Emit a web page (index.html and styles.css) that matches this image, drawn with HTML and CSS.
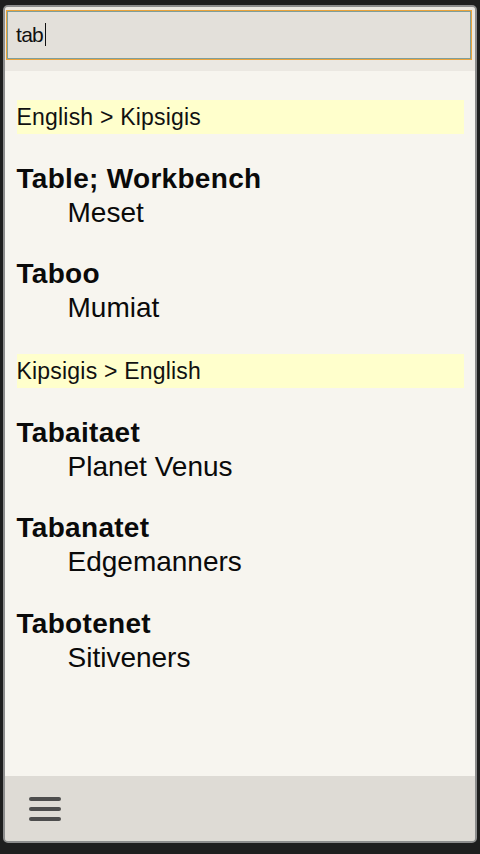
FILE: index.html
```html
<!DOCTYPE html>
<html>
<head>
<meta charset="utf-8">
<link rel="stylesheet" href="styles.css">
</head>
<body>
<div class="window">
  <div class="search-area">
    <div class="search-input"><span class="query">tab</span><span class="caret"></span></div>
  </div>
  <div class="results">
    <div class="band">English &gt; Kipsigis</div>
    <div class="entry"><div class="head">Table; Workbench</div><div class="trans">Meset</div></div>
    <div class="entry"><div class="head">Taboo</div><div class="trans">Mumiat</div></div>
    <div class="band">Kipsigis &gt; English</div>
    <div class="entry"><div class="head">Tabaitaet</div><div class="trans">Planet Venus</div></div>
    <div class="entry"><div class="head">Tabanatet</div><div class="trans">Edgemanners</div></div>
    <div class="entry"><div class="head">Tabotenet</div><div class="trans">Sitiveners</div></div>
  </div>
  <div class="toolbar">
    <div class="menu-icon"><span></span><span></span><span></span></div>
  </div>
</div>
</body>
</html>
```
FILE: styles.css
```css
html, body {
  margin: 0;
  padding: 0;
  background: #1e1e1e;
  width: 480px;
  height: 854px;
  overflow: hidden;
  font-family: "Liberation Sans", Arial, sans-serif;
}
.window {
  margin: 5px 3px 0 3px;
  height: 838px;
  box-sizing: border-box;
  border: 2px solid #8c8c8c;
  border-radius: 5px;
  box-shadow: inset 0 0 0 1px #b9b9b5;
  display: flex;
  flex-direction: column;
  overflow: hidden;
  background: #f7f5ef;
}
.search-area {
  background: #ebe8e2;
  padding: 3px 3px 11px 1px;
}
.search-input {
  height: 50px;
  box-sizing: border-box;
  border: 1px solid #eaa43c;
  box-shadow: inset 0 0 0 1px #7f9f9b;
  background: #e3e0da;
  display: flex;
  align-items: center;
  padding-left: 9px;
}
.query {
  font-size: 21px;
  letter-spacing: -0.7px;
  color: #111;
}
.caret {
  width: 1px;
  height: 23px;
  background: #111;
  margin-left: 2px;
  margin-top: -2px;
}
.results {
  flex: 1;
  padding: 0 11px 0 11.5px;
  background: #f7f5ef;
}
.band {
  margin-top: 29px;
  height: 34px;
  box-sizing: border-box;
  padding-top: 1px;
  line-height: 33px;
  background: #ffffcc;
  font-size: 23px;
  letter-spacing: 0.2px;
  color: #111;
}
.entry {
  padding-top: 27.5px;
  color: #0a0a0a;
}
.head {
  font-weight: bold;
  font-size: 28px;
  line-height: 34px;
  letter-spacing: 0.3px;
}
.trans {
  font-size: 28px;
  line-height: 34px;
  padding-left: 51px;
}
.toolbar {
  height: 65px;
  flex: none;
  background: #dedbd5;
  display: flex;
  align-items: center;
  padding-left: 24px;
}
.menu-icon {
  display: flex;
  flex-direction: column;
  gap: 6px;
  margin-top: 1px;
}
.menu-icon span {
  display: block;
  width: 32px;
  height: 4px;
  border-radius: 2px;
  background: #4d4d4d;
}
```
